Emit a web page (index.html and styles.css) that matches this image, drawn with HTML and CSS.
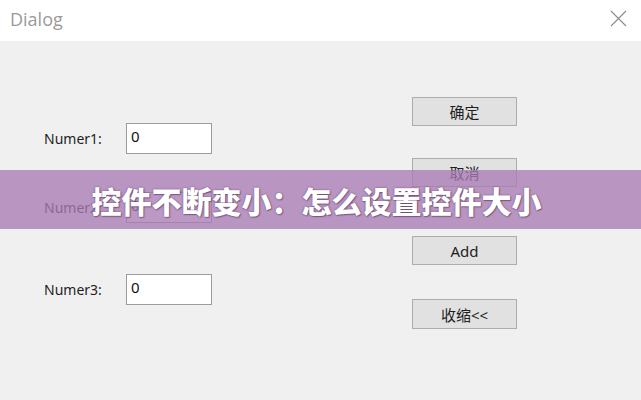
FILE: index.html
```html
<!DOCTYPE html>
<html lang="zh">
<head>
<meta charset="utf-8">
<title>Dialog</title>
<link rel="stylesheet" href="styles.css">
</head>
<body>
<div class="window">
  <div class="titlebar">
    <span class="title">Dialog</span>
    <svg class="close" width="17" height="17" viewBox="0 0 17 17"><path d="M1 1L16 16M16 1L1 16" stroke="#8a8a8a" stroke-width="1.1" fill="none"/></svg>
  </div>
  <div class="client">
    <div class="fields">
      <div class="row"><span class="label">Numer1:</span><div class="input">0</div></div>
      <div class="row row2"><span class="label">Numer2:</span><div class="input">0</div></div>
      <div class="row row3"><span class="label">Numer3:</span><div class="input">0</div></div>
    </div>
    <div class="buttons">
      <div class="btn">确定</div>
      <div class="btn b2">取消</div>
      <div class="btn b3">Add</div>
      <div class="btn b4">收缩&lt;&lt;</div>
    </div>
  </div>
  <div class="banner"><span>控件不断变小：怎么设置控件大小</span></div>
</div>
</body>
</html>
```

FILE: styles.css
```css
html, body {
  margin: 0;
  padding: 0;
}
body {
  font-family: "Noto Sans", "Noto Sans CJK SC", sans-serif;
  background: #f0f0f0;
}
.window {
  position: relative;
  width: 641px;
  height: 400px;
  display: flex;
  flex-direction: column;
  overflow: hidden;
}
.titlebar {
  height: 41px;
  background: #ffffff;
  display: flex;
  align-items: flex-start;
  justify-content: space-between;
  padding: 0 14px 0 10px;
  box-sizing: border-box;
}
.title {
  font-family: "Open Sans", "Noto Sans", sans-serif;
  font-size: 18px;
  color: #9a9a9a;
  line-height: 20px;
  margin-top: 9px;
}
.close {
  margin-top: 10px;
}
.client {
  flex: 1;
  background: #f0f0f0;
  display: flex;
}
.fields {
  padding-top: 82px;
  padding-left: 44px;
  display: flex;
  flex-direction: column;
}
.row {
  display: flex;
  align-items: center;
  height: 31px;
}
.row2 { margin-top: 38px; }
.row3 { margin-top: 51px; }
.label {
  width: 82px;
  font-size: 14px;
  color: #1e1e1e;
}
.input {
  width: 86px;
  height: 31px;
  box-sizing: border-box;
  background: #ffffff;
  border: 1px solid #9c9c9c;
  font-size: 15px;
  color: #111;
  padding: 2px 0 0 4px;
  line-height: 20px;
}
.buttons {
  margin-left: auto;
  margin-right: 124px;
  padding-top: 56px;
  display: flex;
  flex-direction: column;
}
.btn {
  width: 105px;
  height: 29px;
  box-sizing: border-box;
  background: #e1e1e1;
  border: 1px solid #adadad;
  display: flex;
  align-items: center;
  justify-content: center;
  font-family: "Noto Sans", "Noto Sans CJK SC", sans-serif;
  font-size: 15px;
  color: #1e1e1e;
}
.b2 { margin-top: 32px; }
.b3 { margin-top: 49px; }
.b4 { margin-top: 34px; height: 30px; }
.banner {
  position: absolute;
  left: 0;
  right: 0;
  top: 170px;
  height: 59px;
  background: rgba(169, 123, 181, 0.78);
  display: flex;
  align-items: center;
  justify-content: center;
  padding-right: 8px;
  box-sizing: border-box;
}
.banner span {
  font-family: "Noto Sans CJK SC", sans-serif;
  font-weight: 900;
  font-size: 30px;
  line-height: 36px;
  color: #ffffff;
  text-shadow: 0 0 2px rgba(60, 30, 70, 0.6), 1px 1px 1px rgba(60, 30, 70, 0.4);
}
```
